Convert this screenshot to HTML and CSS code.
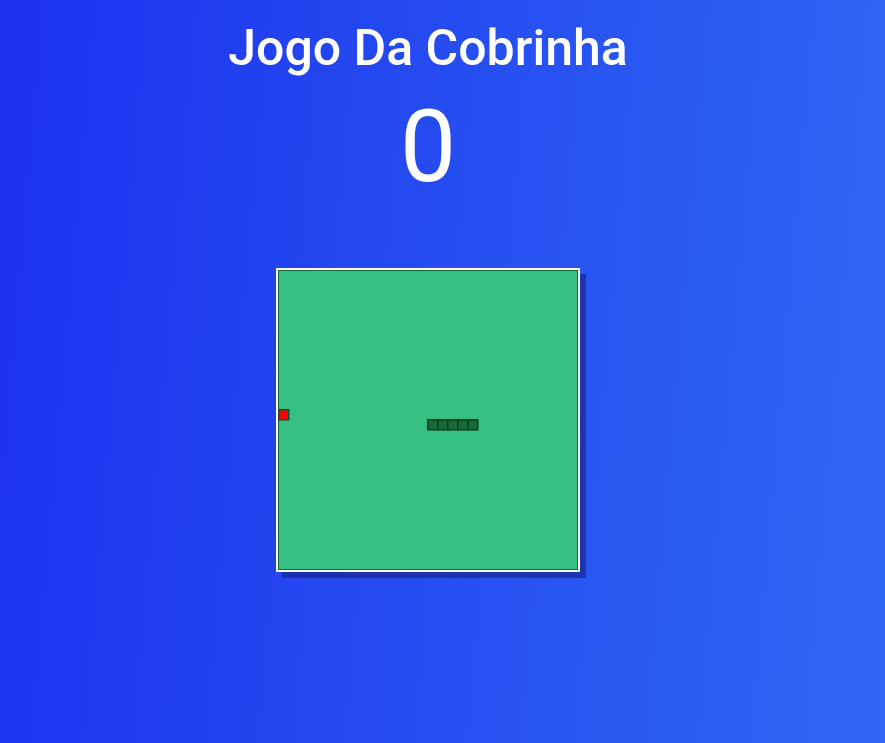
FILE: index.html
```html
<!DOCTYPE html>
<html lang="pt-BR">
<head>
<meta charset="utf-8">
<title>Jogo Da Cobrinha</title>
<link rel="stylesheet" href="styles.css">
</head>
<body>
<main class="game">
  <h1 class="title">Jogo Da Cobrinha</h1>
  <div class="score">0</div>
  <div class="board">
    <svg class="field" width="300" height="300" viewBox="0 0 300 300" xmlns="http://www.w3.org/2000/svg">
      <rect x="0.5" y="0.5" width="299" height="299" fill="#36bf83" stroke="#176b3c" stroke-width="1"/>
      <rect x="0.75" y="139.75" width="10" height="10" fill="#ff0000" stroke="#14502e" stroke-width="1.5"/>
      <g fill="#166a37" stroke="#0c3a1f" stroke-width="1.5">
        <rect x="149.75" y="149.75" width="10" height="10"/>
        <rect x="159.75" y="149.75" width="10" height="10"/>
        <rect x="169.75" y="149.75" width="10" height="10"/>
        <rect x="179.75" y="149.75" width="10" height="10"/>
        <rect x="189.75" y="149.75" width="10" height="10"/>
      </g>
    </svg>
  </div>
</main>
</body>
</html>
```
FILE: styles.css
```css
html, body {
  margin: 0;
  padding: 0;
  height: 100%;
}
body {
  background: linear-gradient(95deg, #1b32ef 0%, #2750f0 55%, #2f68f4 100%);
  font-family: Roboto, "Noto Sans", sans-serif;
  color: #ffffff;
}
.game {
  width: 856px;
  display: flex;
  flex-direction: column;
  align-items: center;
}
.title {
  margin: 19px 0 0;
  font-size: 50px;
  font-weight: 500;
  line-height: 59px;
}
.score {
  font-size: 100px;
  font-weight: 400;
  line-height: 117px;
  margin-top: 10px;
}
.board {
  margin-top: 63px;
  border: 2px solid #ffffff;
  box-shadow: 6px 6px 0 rgba(20, 30, 120, 0.55);
  line-height: 0;
}
.field {
  display: block;
}
```
